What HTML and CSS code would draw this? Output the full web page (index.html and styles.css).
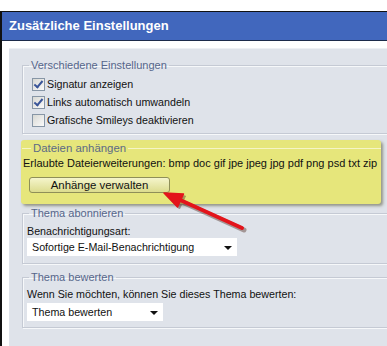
FILE: index.html
```html
<!DOCTYPE html>
<html lang="de">
<head>
    <meta charset="UTF-8">
    <title>Zusätzliche Einstellungen</title>
    <link rel="stylesheet" href="styles.css">
</head>
<body>
    <div class="frame">
        <!-- Kopfzeile -->
        <div class="head">Zusätzliche Einstellungen</div>

        <div class="panel">
            <fieldset class="group first">
                <legend>Verschiedene Einstellungen</legend>
                <label class="check"><span class="box on"></span>Signatur anzeigen</label>
                <label class="check"><span class="box on"></span>Links automatisch umwandeln</label>
                <label class="check"><span class="box"></span>Grafische Smileys deaktivieren</label>
            </fieldset>

            <!-- markierter Bereich -->
            <div class="mark">
                <fieldset class="attach">
                    <legend>Dateien anhängen</legend>
                    <p class="line">Erlaubte Dateierweiterungen: bmp doc gif jpe jpeg jpg pdf png psd txt zip</p>
                    <span class="btn">Anhänge verwalten</span>
                </fieldset>
            </div>

            <fieldset class="group subscribe">
                <legend>Thema abonnieren</legend>
                <p class="line">Benachrichtigungsart:</p>
                <div class="select wide">Sofortige E-Mail-Benachrichtigung<span class="caret"></span></div>
            </fieldset>

            <fieldset class="group rate">
                <legend>Thema bewerten</legend>
                <p class="line">Wenn Sie möchten, können Sie dieses Thema bewerten:</p>
                <div class="select small">Thema bewerten<span class="caret"></span></div>
            </fieldset>
        </div>

        <!-- roter Pfeil -->
        <svg class="arrow" width="90" height="50" viewBox="0 0 90 50">
            <g transform="translate(2,2)" fill="#4a2418" stroke="#4a2418" opacity="0.4">
                <path d="M20 13 L84 42" stroke-width="5" stroke-linecap="round"/>
                <path d="M6 7 L19.5 21 L25.5 8 Z"/>
            </g>
            <g fill="#e3141b" stroke="#e3141b">
                <path d="M20 13 L84 42" stroke-width="4" stroke-linecap="round"/>
                <path d="M6 7 L19.5 21 L25.5 8 Z" stroke-width="1.5" stroke-linejoin="round"/>
            </g>
        </svg>
    </div>
</body>
</html>
```

FILE: styles.css
```css
* {
    margin: 0;
    padding: 0;
    box-sizing: border-box;
}

body {
    background: #fff;
    font-family: "Liberation Sans", Arial, sans-serif;
    font-size: 10.7px;
    color: #111;
    overflow: hidden;
}

.frame {
    position: relative;
    margin-top: 11px;
    width: 460px;
    height: 335px;
    border-left: 2px solid #111;
    border-top: 1px solid #111;
}

/* Kopfzeile */
.head {
    background: #4167bd;
    color: #fff;
    font-weight: bold;
    font-size: 13px;
    height: 29px;
    line-height: 28px;
    padding-left: 7px;
    border-bottom: 1px solid #1c2b4a;
}

.panel {
    margin: 7px 0 0 7px;
    background: #dfe3ea;
    border-top: 1px solid #eef0f4;
    padding: 10px 0 0 13px;
    height: 300px;
}

/* Gruppen */
.group {
    border: 1px solid #c5cad4;
    border-right: 0;
    box-shadow: inset 1px 1px 0 #f6f8fa, 1px 1px 0 #f6f8fa;
    padding: 0 0 0 4px;
}

.group legend,
.attach legend {
    color: #56668a;
    font-size: 11px;
    line-height: 13px;
    padding: 0 2px;
    margin-left: 2px;
}

.first {
    padding-top: 3px;
    padding-bottom: 4px;
}

.subscribe {
    margin-top: 3px;
    padding-top: 4px;
    padding-bottom: 7px;
}

.rate {
    margin-top: 7px;
    padding-top: 3px;
    padding-bottom: 6px;
}

.check {
    display: flex;
    align-items: center;
    height: 18px;
    padding-left: 5px;
}

.box {
    width: 13px;
    height: 13px;
    border: 1px solid #8796a6;
    background: linear-gradient(135deg, #d8d9d4, #fafafa);
    margin-right: 2px;
    position: relative;
}

.box.on::after {
    content: "";
    position: absolute;
    left: 3px;
    top: 0;
    width: 3px;
    height: 7px;
    border: solid #3a5599;
    border-width: 0 2px 2px 0;
    transform: rotate(40deg);
}

.line {
    line-height: 14px;
}

/* markierter Bereich */
.mark {
    width: 360px;
    height: 64px;
    background: #e6e67b;
    margin: 6px 0 0 -1px;
    padding: 1px 0 0 1px;
    box-shadow: 2px 2px 3px rgba(70, 70, 40, 0.5);
    border-radius: 3px;
}

.attach {
    border: 0;
    border-top: 1px solid #f5f5c6;
    padding-left: 1px;
}

.attach legend {
    font-size: 11.4px;
    line-height: 14px;
    margin-left: 8px;
    color: #5b6a86;
}

.attach .line {
    font-size: 11px;
    line-height: 16px;
    white-space: nowrap;
}

.btn {
    display: block;
    width: 141px;
    height: 16px;
    margin: 6px 0 0 6px;
    border: 1px solid #8f8f58;
    border-radius: 3px;
    background: linear-gradient(#f5f5cc, #dcdc8e);
    text-align: center;
    font-size: 11.4px;
    line-height: 14px;
}

.select {
    position: relative;
    background: #fff;
    height: 18px;
    line-height: 18px;
    padding-left: 5px;
}

.select.wide {
    width: 210px;
}

.select.small {
    width: 136px;
    margin-top: 2px;
}

.caret {
    position: absolute;
    right: 5px;
    top: 8px;
    border: 4px solid transparent;
    border-top: 4px solid #111;
    border-bottom: 0;
}

.arrow {
    position: absolute;
    left: 156px;
    top: 174px;
}
```
